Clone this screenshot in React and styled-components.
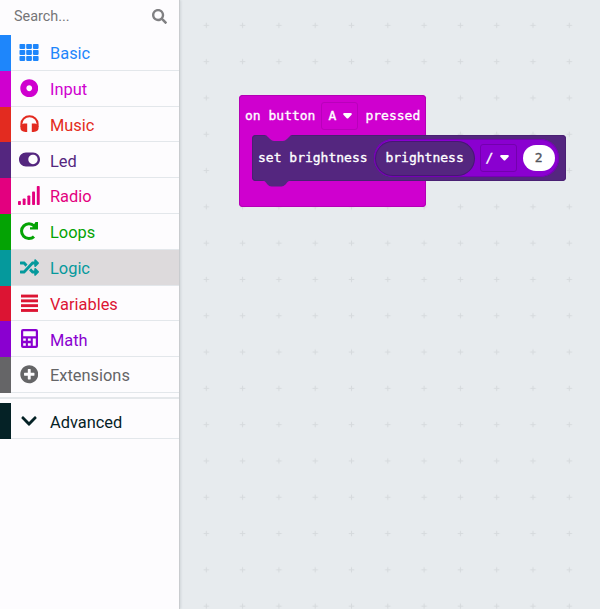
import React from 'react';
import styled, { createGlobalStyle } from 'styled-components';
import { FaSearch, FaDotCircle, FaToggleOn, FaRandom, FaPlusCircle, FaChevronDown } from 'react-icons/fa';

const GlobalStyle = createGlobalStyle`
  * { box-sizing: border-box; }
  body { margin: 0; font-family: Roboto, sans-serif; }
`;

const Editor = styled.div`
  display: grid;
  grid-template-columns: 180px 1fr;
  width: 600px;
  height: 609px;
  overflow: hidden;
`;

const Toolbox = styled.aside`
  display: flex;
  flex-direction: column;
  background: #fdfcfe;
  border-right: 1px solid #c9cccf;
  box-shadow: 1px 0 2px rgba(60, 70, 80, 0.12);
  z-index: 1;
`;

const SearchBar = styled.div`
  display: flex;
  align-items: center;
  justify-content: space-between;
  height: 35px;
  padding: 0 12px 2px 14px;
  font-size: 14.4px;
  color: #757577;
  svg { width: 15px; height: 15px; color: #808083; }
`;

const Category = styled.div`
  display: flex;
  align-items: center;
  height: 35.8px;
  border-left: 11px solid ${p => p.$color};
  box-shadow: inset 0 -1px #e3e7eb;
  background: ${p => (p.$active ? '#dddadc' : 'transparent')};
  color: ${p => p.$color};
`;

const IconSlot = styled.span`
  display: flex;
  align-items: center;
  justify-content: center;
  width: 36px;
  height: 20px;
  margin-right: 3px;
  padding-bottom: 1px;
  svg { flex: none; display: block; }
`;

const Label = styled.span`
  font-size: 16.4px;
  line-height: 20px;
  padding-top: 2.8px;
`;

const Divider = styled.div`
  height: 10.5px;
  padding-top: 4px;
  &::before { content: ''; display: block; height: 2px; background: #e5e8eb; }
`;

const Workspace = styled.main`
  position: relative;
  background: #e7ebee;
  padding: 95px 0 0 59px;
`;

const GridDots = styled.svg`
  position: absolute;
  inset: 0;
  width: 100%;
  height: 100%;
`;

const EventBlock = styled.div`
  position: relative;
  width: 187px;
  height: 112px;
  padding: 0 0 0 13px;
  background: #cf00cf;
  border-radius: 4px;
  box-shadow: inset 0 0 0 1px #b400b4;
  font: 13px/16px "DejaVu Sans Mono", monospace;
  -webkit-text-stroke: 0.35px currentColor;
  color: #fff;
`;

const EventHead = styled.div`
  display: flex;
  align-items: center;
  height: 40px;
  padding-top: 1px;
  margin-left: -7px;
  white-space: pre;
`;

const FieldMenu = styled.span`
  display: flex;
  align-items: center;
  justify-content: space-between;
  width: ${p => p.$width}px;
  height: 28px;
  margin: ${p => p.$margin};
  padding: 0 ${p => p.$right}px 0 ${p => p.$left}px;
  border: 1px solid ${p => p.$edge};
  border-radius: 3px;
`;

const CommandBlock = styled.div`
  display: flex;
  align-items: center;
  position: relative;
  width: 313.5px;
  height: 46px;
  padding-left: 6px;
  background: #54267f;
  border-radius: 4px;
  box-shadow: inset 0 0 0 1px #4a2073;
  white-space: pre;
`;

const Notch = styled.svg`
  position: absolute;
  left: 10px;
  top: ${p => p.$top}px;
  width: 30px;
  height: 7px;
`;

const Expression = styled.div`
  display: flex;
  align-items: center;
  width: 185px;
  height: 38px;
  margin-left: 6px;
  padding-left: 2px;
  background: #8a00d0;
  border-radius: 19px;
  box-shadow: inset 0 0 0 1px #7600b4;
`;

const Reporter = styled.span`
  display: flex;
  align-items: center;
  justify-content: center;
  width: 98px;
  height: 33px;
  border-radius: 17px;
  background: #54267f;
  box-shadow: 0 0 0 1px #471675;
`;

const NumberField = styled.span`
  display: flex;
  align-items: center;
  justify-content: center;
  width: 32px;
  height: 26px;
  border-radius: 13px;
  background: #fff;
  color: #52555c;
`;

const Caret = () => (
  <svg width="9" height="6" viewBox="0 0 9 6" fill="#fff"><path d="M1.2 0h6.6q1.5.3.8 1.7L5.3 5.2q-.8.8-1.6 0L.4 1.7Q-.3.3 1.2 0z" /></svg>
);

const GridIcon = () => (
  <svg width="20" height="17" viewBox="0 0 20 17" fill="currentColor">
    {[0, 6, 12].map(y => [0.5, 7.2, 13.9].map(x => <rect key={x + '-' + y} x={x} y={y} width="5.7" height="4.9" rx=".8" />))}
  </svg>
);

const HeadphonesIcon = () => (
  <svg width="19" height="17" viewBox="0 0 19 17" fill="currentColor">
    <path d="M1.4 12V8.8a8.1 7.6 0 0 1 16.2 0V12" fill="none" stroke="currentColor" strokeWidth="2" />
    <path d="M4 8.5h3.200V17H5.500Q.4 16.500.4 12.700.5 9 4 8.500zM15 8.500h-3.200V17h1.700q5.100-.5 5.100-4.300Q18.500 9 15 8.500z" />
  </svg>
);

const SignalIcon = () => (
  <svg width="22" height="19" viewBox="0 0 22 19" fill="currentColor">
    {[4, 6.5, 9.5, 13.5, 19].map((h, i) => <rect key={h} x={i * 4.7} y={19 - h} width="2.9" height={h} rx=".8" />)}
  </svg>
);

const LoopIcon = () => (
  <svg width="20" height="20" viewBox="0 0 20 20" fill="none" stroke="currentColor" strokeWidth="3">
    <path d="M15.2 5A7.4 7.4 0 1 0 15 15.6" />
    <path d="M16.5 1h2.500v7.500h-8V6.300h2.600l.5-1.600z" fill="currentColor" stroke="none" />
  </svg>
);

const LinesIcon = () => (
  <svg width="17" height="18" viewBox="0 0 17 18" fill="currentColor">
    {[0.6, 5.4, 10.2, 15].map(y => <rect key={y} y={y} width="17" height="2.9" />)}
  </svg>
);

const CalculatorIcon = () => (
  <svg width="17" height="19" viewBox="0 0 17 19" fill="currentColor" fillRule="evenodd">
    <path d="M2 0h13q2 0 2 2v15q0 2-2 2H2q-2 0-2-2V2Q0 0 2 0zM2.200 2.200v5h12.600v-5zM2.200 9.400v2.400h2.600V9.400zm4.700 0v2.400h2.800V9.400zm4.900 0v7.400h3V9.400zM2.200 14.200v2.600h2.600v-2.600zm4.700 0v2.600h2.800v-2.600z" />
  </svg>
);

const categories = [
  ['Basic', '#1e86fb', <GridIcon />],
  ['Input', '#cf00cf', <FaDotCircle size={18.5} />],
  ['Music', '#e32b20', <HeadphonesIcon />],
  ['Led', '#54267f', <FaToggleOn size={21} />],
  ['Radio', '#e3007f', <SignalIcon />],
  ['Loops', '#04a304', <LoopIcon />],
  ['Logic', '#05999c', <FaRandom size={19} />],
  ['Variables', '#dc1433', <LinesIcon />],
  ['Math', '#8a00d0', <CalculatorIcon />],
  ['Extensions', '#656567', <FaPlusCircle size={18.5} />],
];

const CategoryRow = ({ name, color, icon, active }) => (
  <Category $color={color} $active={active}>
    <IconSlot>{icon}</IconSlot>
    <Label>{name}</Label>
  </Category>
);

export default function App() {
  return (
    <Editor>
      <GlobalStyle />
      <Toolbox>
        <SearchBar>Search...<FaSearch /></SearchBar>
        {categories.map(([name, color, icon]) => (
          <CategoryRow key={name} name={name} color={color} icon={icon} active={name === 'Logic'} />
        ))}
        <Divider />
        <CategoryRow name="Advanced" color="#052226" icon={<FaChevronDown size={18} />} />
      </Toolbox>
      <Workspace>
        <GridDots>
          <defs>
            <pattern id="crosses" x="8.15" y="7.2" width="36.3" height="36.3" patternUnits="userSpaceOnUse">
              <path d="M15.4 18.15h5.5M18.15 15.4v5.5" stroke="#d6dadd" strokeWidth="1.1" />
            </pattern>
          </defs>
          <rect width="100%" height="100%" fill="url(#crosses)" />
        </GridDots>
        <EventBlock>
          <EventHead>
            on button
            <FieldMenu $width={37} $margin="0 7px 0 6px" $edge="#b900bb" $left={6} $right={5}>A<Caret /></FieldMenu>
            pressed
          </EventHead>
          <CommandBlock>
            <Notch $top={0} viewBox="0 0 30 7"><path d="M0 0h2.500q2 0 3.500 2l2 2q2 2 4 2h9q2 0 4-2l2-2q1.500-2 3-2z" fill="#cf00cf" /></Notch>
            <Notch $top={45} viewBox="0 0 30 7"><path d="M0 0q2 .5 3.500 2l2 2.500q1.500 2 4 2h10q2 0 4-2l2-2.500Q27 .5 30 0z" fill="#54267f" /></Notch>
            set brightness
            <Expression>
              <Reporter>brightness</Reporter>
              <FieldMenu $width={37} $margin="0 6px 0 6px" $edge="#7300ae" $left={5} $right={7}>/<Caret /></FieldMenu>
              <NumberField>2</NumberField>
            </Expression>
          </CommandBlock>
        </EventBlock>
      </Workspace>
    </Editor>
  );
}
